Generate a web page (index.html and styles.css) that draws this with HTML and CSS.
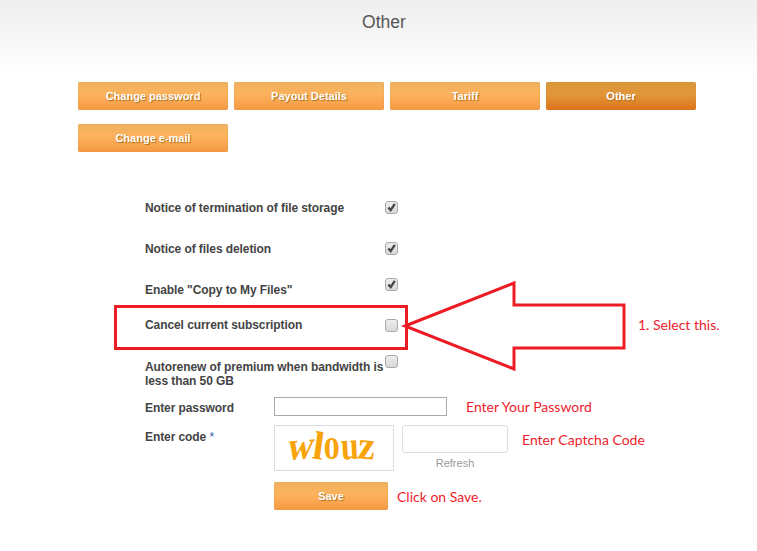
FILE: index.html
```html
<!DOCTYPE html>
<html lang="en">
<head>
	<meta charset="UTF-8">
	<title>Other</title>
	<link rel="stylesheet" href="styles.css">
</head>
<body>
	<header class="top">
		<h1>Other</h1>
	</header>
	<nav class="tabs">
		<a class="tab">Change password</a>
		<a class="tab">Payout Details</a>
		<a class="tab">Tariff</a>
		<a class="tab active">Other</a>
		<a class="tab">Change e-mail</a>
	</nav>
	<main class="form">
		<div class="row r1">
			<label>Notice of termination of file storage</label>
			<span class="check"><svg viewBox="0 0 11 11"><path d="M2.4 5.4l2.3 2.7L8.8 1.8" fill="none" stroke="#444" stroke-width="2.3"/></svg></span>
		</div>
		<div class="row r2">
			<label>Notice of files deletion</label>
			<span class="check"><svg viewBox="0 0 11 11"><path d="M2.4 5.4l2.3 2.7L8.8 1.8" fill="none" stroke="#444" stroke-width="2.3"/></svg></span>
		</div>
		<div class="row r3">
			<label>Enable "Copy to My Files"</label>
			<span class="check"><svg viewBox="0 0 11 11"><path d="M2.4 5.4l2.3 2.7L8.8 1.8" fill="none" stroke="#444" stroke-width="2.3"/></svg></span>
		</div>
		<div class="row r4">
			<label>Cancel current subscription</label>
			<span class="check"></span>
		</div>
		<div class="row r5">
			<label>Autorenew of premium when bandwidth is less than 50 GB</label>
			<span class="check"></span>
		</div>
		<div class="field f-pass">
			<label>Enter password</label>
			<input type="text" class="pass">
			<span class="note">Enter Your Password</span>
		</div>
		<div class="field f-code">
			<label>Enter code <i>*</i></label>
			<div class="captcha"><span class="c-w">w</span><span class="c-l">l</span><span class="c-0">0</span><span class="c-u">u</span><span class="c-z">z</span></div>
			<div class="code-box">
				<input type="text" class="code">
				<a class="refresh">Refresh</a>
			</div>
			<span class="note">Enter Captcha Code</span>
		</div>
		<div class="field f-save">
			<a class="tab save">Save</a>
			<span class="note">Click on Save.</span>
		</div>
	</main>

	<!-- annotation drawn over the form -->
	<svg class="marks" width="757" height="551" viewBox="0 0 757 551">
		<rect x="115.5" y="306.5" width="291" height="42" fill="none" stroke="#ed1c24" stroke-width="3"/>
		<path d="M405 326L514 283V305H624V348H514V369Z" fill="#fff" stroke="#ed1c24" stroke-width="3"/>
	</svg>
	<span class="note select">1. Select this.</span>
</body>
</html>
```
FILE: styles.css
```css
html, body {
	margin: 0;
	padding: 0;
	background: #fff;
}
body {
	font-family: "Liberation Sans", Arial, sans-serif;
	font-size: 12px;
	color: #444;
	height: 551px;
	overflow: hidden;
	position: relative;
}

/* header */
.top {
	background: linear-gradient(#eeeeee, #ffffff);
	height: 75px;
	box-sizing: border-box;
	padding-top: 12px;
}
.top h1 {
	color: #555;
	font-size: 17.5px;
	font-weight: normal;
	line-height: 20px;
	margin: 0;
	padding-left: 11px;
	text-align: center;
}

/* tabs */
.tabs {
	display: flex;
	flex-wrap: wrap;
	gap: 14px 6px;
	margin: 7px 0 0 78px;
	width: 630px;
}
.tab {
	background: linear-gradient(#eeb25f 0%, #fdb25c 45%, #f59843 100%);
	border-radius: 2px;
	box-shadow: inset 0 0 1px rgba(190, 110, 30, .6);
	color: #fff;
	display: block;
	font-size: 11px;
	font-weight: bold;
	height: 28px;
	line-height: 28px;
	text-align: center;
	text-shadow: 1px 1px 1px #a8701f;
	width: 150px;
}
.tab.active {
	background: linear-gradient(#d9983a 0%, #e2963a 45%, #de7318 100%);
}

/* form */
.form {
	margin: 49px 0 0 145px;
}
.row {
	display: flex;
	align-items: flex-start;
	font-weight: bold;
	letter-spacing: -.08px;
	line-height: 14px;
}
.row label {
	width: 240px;
	flex: none;
}
.check {
	background: linear-gradient(#eee, #d8d8d8);
	border: 1px solid #aaa;
	border-radius: 3px;
	box-sizing: border-box;
	display: block;
	flex: none;
	height: 13px;
	width: 13px;
}
.check svg {
	display: block;
	height: 11px;
	width: 11px;
}
.r1 { height: 41px; }
.r2 { height: 41px; }
.r3 { height: 35px; }
.r4 { height: 36px; }
.r5 { height: 43px; }
.r3 .check { margin-top: -5px; }
.r4 .check { margin-top: 1px; }
.r5 .check { margin-top: 1px; }
.r5 label { padding-top: 6px; }

.field {
	display: flex;
	align-items: flex-start;
	font-weight: bold;
	letter-spacing: -.08px;
}
.field label {
	flex: none;
	width: 129px;
}
.field label i {
	color: #2a5ea8;
	font-style: normal;
	font-weight: normal;
}
.note {
	color: #ed1c2c;
	font-family: Lato, "Open Sans", sans-serif;
	font-size: 14px;
	font-weight: normal;
	letter-spacing: 0;
}
.f-pass {
	height: 28px;
	line-height: 19px;
}
.pass {
	border: 1px solid #aaa;
	box-sizing: border-box;
	height: 19px;
	margin: 0 19px 0 0;
	padding: 0;
	width: 173px;
}
.f-pass label { padding-top: 2px; }
.f-code {
	height: 57px;
}
.f-code label { padding-top: 5px; line-height: 14px; }
.captcha {
	border: 1px solid #ddd;
	box-sizing: border-box;
	color: #f7a30a;
	display: flex;
	align-items: center;
	justify-content: center;
	flex: none;
	font-family: "Liberation Serif", serif;
	font-size: 40px;
	font-weight: bold;
	height: 46px;
	letter-spacing: -3px;
	line-height: 40px;
	margin-right: 8px;
	padding: 0 8px 4px 0;
	width: 120px;
}
.captcha span {
	display: block;
}
.c-w { transform: rotate(-5deg) skewX(-14deg) scaleX(.9); }
.c-l { transform: rotate(8deg); }
.c-0 { transform: scale(.8, .78); transform-origin: 50% 78%; }
.c-u { transform: rotate(-3deg) scaleX(.8); }
.c-z { transform: rotate(5deg) scaleX(.95); }
.code-box {
	flex: none;
	margin-right: 14px;
	text-align: center;
	width: 106px;
}
.code {
	border: 1px solid #ddd;
	border-radius: 3px;
	box-sizing: border-box;
	display: block;
	height: 28px;
	margin: 0;
	padding: 0;
	width: 106px;
}
.refresh {
	color: #999;
	display: block;
	font-size: 11px;
	font-weight: normal;
	letter-spacing: 0;
	line-height: 14px;
	margin-top: 3px;
}
.f-code .note { padding-top: 6px; }
.f-save {
	align-items: center;
	margin-left: 129px;
}
.tab.save {
	margin-right: 9px;
	width: 114px;
}

/* annotation */
.marks {
	left: 0;
	pointer-events: none;
	position: absolute;
	top: 0;
}
.select {
	left: 638px;
	position: absolute;
	top: 316px;
}
```
